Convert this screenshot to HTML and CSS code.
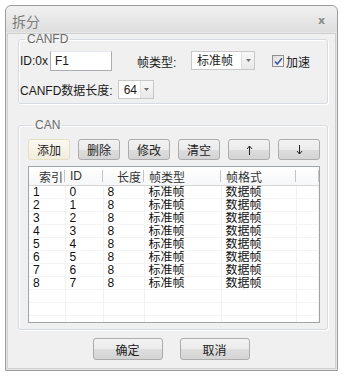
FILE: index.html
```html
<!DOCTYPE html>
<html lang="zh-CN">
<head>
    <meta charset="UTF-8">
    <title>拆分</title>
    <link rel="stylesheet" href="styles.css">
</head>
<body>
    <div class="window">
        <div class="titlebar">
            <span class="title">拆分</span>
            <span class="close">x</span>
        </div>
        <div class="client">
            <fieldset class="group group-canfd">
                <legend>CANFD</legend>
                <div class="row row-id">
                    <span class="lbl lbl-id">ID:0x</span>
                    <div class="textbox">F1</div>
                    <span class="lbl lbl-type">帧类型:</span>
                    <div class="combo combo-type">
                        <span class="combo-value">标准帧</span>
                        <span class="combo-arrow"><svg width="5" height="3" viewBox="0 0 5 3"><path d="M0 0h5L2.5 3z" fill="#6d6d6d"/></svg></span>
                    </div>
                    <span class="check"><svg width="9" height="9" viewBox="0 0 9 9"><path d="M1 4.5l2.3 2.6L8 1.2" fill="none" stroke="#3d5a9a" stroke-width="1.6"/></svg></span>
                    <span class="lbl lbl-fast">加速</span>
                </div>
                <div class="row row-len">
                    <span class="lbl">CANFD数据长度:</span>
                    <div class="combo combo-len">
                        <span class="combo-value">64</span>
                        <span class="combo-arrow"><svg width="5" height="3" viewBox="0 0 5 3"><path d="M0 0h5L2.5 3z" fill="#6d6d6d"/></svg></span>
                    </div>
                </div>
            </fieldset>

            <fieldset class="group group-can">
                <legend>CAN</legend>
                <div class="toolbar">
                    <button class="btn btn-hot">添加</button>
                    <button class="btn">删除</button>
                    <button class="btn">修改</button>
                    <button class="btn">清空</button>
                    <button class="btn"><svg width="7" height="10" viewBox="0 0 7 10"><path d="M3.5 10V1.5M1 4l2.5-3L6 4" fill="none" stroke="#222" stroke-width="1"/></svg></button>
                    <button class="btn"><svg width="7" height="10" viewBox="0 0 7 10"><path d="M3.5 0v8.5M1 6l2.5 3L6 6" fill="none" stroke="#222" stroke-width="1"/></svg></button>
                </div>
                <div class="list">
                    <table class="grid">
                        <colgroup>
                            <col style="width: 36px">
                            <col style="width: 38px">
                            <col style="width: 41px">
                            <col style="width: 77px">
                            <col style="width: 75px">
                            <col>
                        </colgroup>
                        <thead>
                            <tr>
                                <th class="h-idx">索引</th>
                                <th class="h-id">ID</th>
                                <th class="h-len">长度</th>
                                <th>帧类型</th>
                                <th>帧格式</th>
                                <th></th>
                            </tr>
                        </thead>
                        <tbody>
                            <tr><td>1</td><td>0</td><td>8</td><td>标准帧</td><td>数据帧</td><td></td></tr>
                            <tr><td>2</td><td>1</td><td>8</td><td>标准帧</td><td>数据帧</td><td></td></tr>
                            <tr><td>3</td><td>2</td><td>8</td><td>标准帧</td><td>数据帧</td><td></td></tr>
                            <tr><td>4</td><td>3</td><td>8</td><td>标准帧</td><td>数据帧</td><td></td></tr>
                            <tr><td>5</td><td>4</td><td>8</td><td>标准帧</td><td>数据帧</td><td></td></tr>
                            <tr><td>6</td><td>5</td><td>8</td><td>标准帧</td><td>数据帧</td><td></td></tr>
                            <tr><td>7</td><td>6</td><td>8</td><td>标准帧</td><td>数据帧</td><td></td></tr>
                            <tr><td>8</td><td>7</td><td>8</td><td>标准帧</td><td>数据帧</td><td></td></tr>
                            <tr><td></td><td></td><td></td><td></td><td></td><td></td></tr>
                            <tr><td></td><td></td><td></td><td></td><td></td><td></td></tr>
                            <tr><td></td><td></td><td></td><td></td><td></td><td></td></tr>
                            <tr><td></td><td></td><td></td><td></td><td></td><td></td></tr>
                        </tbody>
                    </table>
                </div>
            </fieldset>

            <div class="actions">
                <button class="btn btn-wide">确定</button>
                <button class="btn btn-wide">取消</button>
            </div>
        </div>
    </div>
</body>
</html>
```

FILE: styles.css
```css
body {
    margin: 0;
    background: #ffffff;
    font-family: "Liberation Sans", "Noto Sans CJK SC", sans-serif;
    font-size: 12px;
    color: #1a1a1a;
}

.window {
    box-sizing: border-box;
    margin: 5px 0 0 5px;
    width: 333px;
    height: 366px;
    border: 1px solid #9c9c9c;
    border-radius: 6px 6px 0 0;
    background: linear-gradient(#f1f1f1, #dedede 26px, #e6e6e6 26px);
    display: flex;
    flex-direction: column;
}

.titlebar {
    height: 25px;
    padding: 2px 12px 0 6px;
    display: flex;
    align-items: center;
    justify-content: space-between;
}

.title {
    font-size: 14px;
    color: #7d7d7d;
}

.close {
    font-family: "DejaVu Sans", sans-serif;
    font-size: 11px;
    font-weight: bold;
    color: #8a8a8a;
}

.client {
    flex: 1;
    margin: 0 1px 1px;
    border: 1px solid #d0d0d0;
    background: #f0f0f0;
    padding: 0 0 0 10px;
}

.group {
    box-sizing: border-box;
    width: 310px;
    margin: 0;
    padding: 0 0 0 1px;
    border: 1px solid #d5dbe0;
    border-radius: 3px;
    box-shadow: inset 1px 1px 0 #ffffff, 1px 1px 0 #ffffff;
}

.group legend {
    margin-left: 5px;
    padding: 0 2px;
    line-height: 10px;
    color: #6b6b6b;
}

.group-canfd {
    padding-top: 6px;
    padding-bottom: 3px;
}

.row {
    display: flex;
    align-items: center;
    height: 22px;
}

.row-len {
    margin-top: 6px;
}

.lbl {
    white-space: nowrap;
}

.lbl-id {
    width: 30px;
}

.lbl-type {
    width: 54px;
    margin-left: 25px;
}

.lbl-fast {
    margin-left: 2px;
}

.textbox {
    box-sizing: border-box;
    width: 62px;
    height: 20px;
    border: 1px solid #abadb3;
    border-top-color: #e3e9ef;
    background: #ffffff;
    padding: 2px 4px;
    line-height: 14px;
}

.combo {
    box-sizing: border-box;
    height: 19px;
    border: 1px solid #c8c8c8;
    background: #ffffff;
    display: flex;
    margin-top: -2px;
}

.combo-type {
    width: 64px;
}

.combo-len {
    width: 36px;
    margin-left: 5px;
    margin-top: 0;
}

.combo-value {
    flex: 1;
    padding: 2px 0 0 5px;
    line-height: 15px;
}

.combo-arrow {
    width: 12px;
    border-left: 1px solid #dedede;
    background: linear-gradient(#f7f7f7, #e9e9e9);
    display: flex;
    align-items: center;
    justify-content: center;
}

.check {
    box-sizing: border-box;
    width: 12px;
    height: 12px;
    margin-left: 17px;
    border: 1px solid #8f8f8f;
    background: linear-gradient(135deg, #dcdcdc, #fbfbfb);
    display: flex;
    align-items: center;
    justify-content: center;
}

.group-can {
    margin-top: 16px;
    padding: 9px 0 6px 9px;
}

.toolbar {
    display: flex;
    gap: 8px;
}

.btn {
    box-sizing: border-box;
    width: 42px;
    height: 21px;
    padding: 0;
    border: 1px solid #acacac;
    border-radius: 3px;
    background: linear-gradient(#f3f3f3, #ebebeb 50%, #dddddd 51%, #d4d4d4);
    font-family: "Liberation Sans", "Noto Sans CJK SC", sans-serif;
    font-size: 12px;
    color: #222222;
    display: flex;
    align-items: center;
    justify-content: center;
}

.btn-hot {
    border-color: #e6dfc2;
    background: linear-gradient(#fbf9f0, #f2eedd);
}

.list {
    box-sizing: border-box;
    width: 292px;
    height: 157px;
    margin-top: 6px;
    border: 1px solid #a0a4ab;
    background: #ffffff;
    overflow: hidden;
}

.grid {
    width: 100%;
    table-layout: fixed;
    border-collapse: collapse;
}

.grid th {
    height: 18px;
    padding: 0 0 0 5px;
    font-weight: normal;
    text-align: left;
    color: #333333;
    border-bottom: 1px solid #d6d6d6;
    background-image: linear-gradient(#c4c4c4, #c4c4c4), linear-gradient(#ffffff, #f6f7f9);
    background-size: 1px 12px, 100% 100%;
    background-position: right 3px, 0 0;
    background-repeat: no-repeat;
}

.grid th.h-idx {
    padding-left: 10px;
}

.grid th.h-len {
    padding-left: 14px;
}

.grid td {
    height: 12px;
    padding: 0 0 0 4px;
    line-height: 12px;
    color: #111111;
    border-right: 1px solid #f1f1f1;
    border-bottom: 1px solid #f4f4f4;
    white-space: nowrap;
    overflow: hidden;
}

.actions {
    display: flex;
    justify-content: center;
    gap: 17px;
    margin: 8px 0 0 -11px;
}

.btn-wide {
    width: 70px;
    height: 22px;
}
```
